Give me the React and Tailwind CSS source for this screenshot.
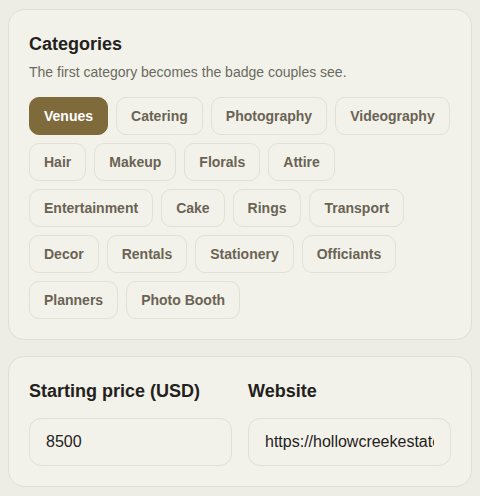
import React from "react";

const categories = [
  "Venues", "Catering", "Photography", "Videography", "Hair", "Makeup", "Florals", "Attire",
  "Entertainment", "Cake", "Rings", "Transport", "Decor", "Rentals", "Stationery", "Officiants",
  "Planners", "Photo Booth",
];

export default function App() {
  return (
    <div className="min-h-[496px] bg-[#ededE5] px-2 pt-[9px] pb-2 font-['Liberation_Sans',Arial,sans-serif] text-[#23211c]">
      <div className="rounded-2xl border border-[#e0dfd4] bg-[#f2f2ea] p-5">
        <h2 className="text-lg font-bold leading-7">Categories</h2>
        <p className="mt-1 text-sm leading-5 text-[#6b6a60]">The first category becomes the badge couples see.</p>
        <div className="mt-[15px] flex flex-wrap gap-2">
          {categories.map((c, i) => (
            <button
              key={c}
              className={
                i === 0
                  ? "h-[38px] rounded-[10px] border border-[#7f6a3c] bg-[#7f6a3c] px-[14px] text-sm font-bold text-white"
                  : "h-[38px] rounded-[10px] border border-[#e2e0d4] bg-[#f3f2ea] px-[14px] text-sm font-bold text-[#6a6354]"
              }
            >
              {c}
            </button>
          ))}
        </div>
      </div>

      <div className="mt-4 rounded-2xl border border-[#e0dfd4] bg-[#f2f2ea] p-5">
        <div className="grid grid-cols-2 gap-4">
          <div>
            <label className="block text-lg font-bold leading-7">Starting price (USD)</label>
            <input
              defaultValue="8500"
              className="mt-[13px] h-12 w-full rounded-xl border border-[#e2e0d4] bg-[#f3f2ea] px-4 text-base text-[#23211c] outline-none"
            />
          </div>
          <div>
            <label className="block text-lg font-bold leading-7">Website</label>
            <input
              defaultValue="https://hollowcreekestate.com"
              className="mt-[13px] h-12 w-full rounded-xl border border-[#e2e0d4] bg-[#f3f2ea] px-4 text-base text-[#23211c] outline-none"
            />
          </div>
        </div>
      </div>
    </div>
  );
}
